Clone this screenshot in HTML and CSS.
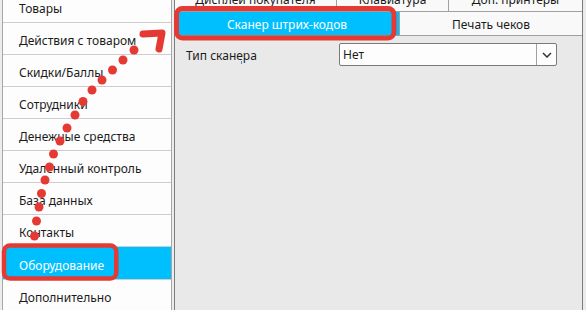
FILE: index.html
```html
<!DOCTYPE html>
<html lang="ru">
<head>
<meta charset="utf-8">
<link rel="stylesheet" href="styles.css">
</head>
<body>
<div class="app">
  <div class="edge"></div>
  <ul class="menu">
    <li class="item">Товары</li>
    <li class="item">Действия с товаром</li>
    <li class="item">Скидки/Баллы</li>
    <li class="item">Сотрудники</li>
    <li class="item">Денежные средства</li>
    <li class="item">Удаленный контроль</li>
    <li class="item">База данных</li>
    <li class="item">Контакты</li>
    <li class="item active">Оборудование</li>
    <li class="item">Дополнительно</li>
  </ul>
  <div class="gap"></div>
  <div class="main">
    <div class="tabrow first">
      <div class="tab t1">Дисплей покупателя</div>
      <div class="tab t2">Клавиатура</div>
      <div class="tab t3">Доп. принтеры</div>
    </div>
    <div class="tabrow second">
      <div class="tab sel">Сканер штрих-кодов</div>
      <div class="tab t5">Печать чеков</div>
    </div>
    <div class="pane">
      <div class="field">
        <span class="label">Тип сканера</span>
        <div class="combo">
          <span class="val">Нет</span>
          <span class="btn"><svg width="10" height="6" viewBox="0 0 10 6"><path d="M1 1 L5 5 L9 1" fill="none" stroke="#333" stroke-width="1.5"/></svg></span>
        </div>
      </div>
      <div class="caret"></div>
    </div>
  </div>
  <div class="rest"></div>
</div>
<svg class="annot" width="586" height="310" viewBox="0 0 586 310">
  <g fill="none" stroke="#e53a33">
    <rect x="4" y="245.5" width="112.3" height="33" rx="6" stroke-width="4.5"/>
    <rect x="176.5" y="8.5" width="217.5" height="29.5" rx="6" stroke-width="5"/>
    <path d="M143 34 L162 33 L159 49" stroke-width="7" stroke-linecap="round" stroke-linejoin="round"/>
  </g>
  <g fill="#e53a33">
    <circle cx="134" cy="50" r="4.5"/>
    <circle cx="123" cy="60" r="4.5"/>
    <circle cx="112.5" cy="70" r="4.5"/>
    <circle cx="102" cy="80" r="4.5"/>
    <circle cx="92" cy="90" r="4.5"/>
    <circle cx="83" cy="101.5" r="4.5"/>
    <circle cx="75" cy="115" r="4.5"/>
    <circle cx="67" cy="128" r="4.5"/>
    <circle cx="60" cy="141" r="4.5"/>
    <circle cx="53.5" cy="154" r="4.5"/>
    <circle cx="49.5" cy="167" r="4.5"/>
    <circle cx="45" cy="180" r="4.5"/>
    <circle cx="41.5" cy="193.5" r="4.5"/>
    <circle cx="39" cy="207" r="4.5"/>
    <circle cx="36.5" cy="221" r="4.5"/>
    <circle cx="34.5" cy="236" r="4.5"/>
  </g>
</svg>
</body>
</html>
```

FILE: styles.css
```css
html, body {
  margin: 0;
  padding: 0;
}
body {
  width: 586px;
  height: 310px;
  overflow: hidden;
  background: #ebebeb;
  font-family: "Noto Sans", "Open Sans", sans-serif;
  font-size: 12px;
  color: #1b1b1b;
  position: relative;
}
.app {
  display: flex;
  height: 310px;
}
.edge {
  width: 2px;
  background: #ececec;
  border-right: 1px solid #a8a8a8;
}
.menu {
  list-style: none;
  margin: -9px 0 0 0;
  padding: 0;
  width: 168px;
  background: #fdfdfd;
  border-right: 1px solid #a6a6a6;
}
.item {
  border-bottom: 1px solid #cdcdcd;
  display: flex;
  align-items: center;
  padding: 4px 0 0 16px;
  box-sizing: border-box;
  height: 32px;
}
.item.active {
  background: #00bfff;
  color: #ffffff;
  height: 33px;
}
.gap {
  width: 2px;
  background: #ececec;
}
.main {
  width: 407px;
  border-left: 1px solid #7c7c7c;
  border-right: 1px solid #7c7c7c;
  display: flex;
  flex-direction: column;
}
.tabrow {
  display: flex;
  border-bottom: 1px solid #a0a0a0;
}
.tabrow.first {
  margin-top: -13px;
  height: 24px;
}
.tabrow.second {
  height: 23px;
}
.tab {
  display: flex;
  align-items: center;
  justify-content: center;
  background: #f9f9f9;
  box-sizing: border-box;
  padding-top: 1px;
}
.t1 { width: 162px; border-right: 1px solid #a0a0a0; }
.t2 { width: 112px; border-right: 1px solid #a0a0a0; }
.t3 { flex: 1; }
.tab.sel {
  width: 224px;
  background: #00bfff;
  color: #ffffff;
}
.t5 {
  flex: 1;
  border-left: 1px solid #a0a0a0;
}
.pane {
  flex: 1;
  background: #e9e9e9;
  position: relative;
}
.field {
  display: flex;
  align-items: center;
  padding: 7px 0 0 11px;
}
.label {
  width: 153px;
  padding-top: 1px;
}
.combo {
  width: 218px;
  height: 23px;
  box-sizing: border-box;
  border: 1px solid #7a7a7a;
  border-radius: 2px;
  background: #fdfdfd;
  display: flex;
  align-items: center;
}
.val {
  flex: 1;
  padding-left: 3px;
}
.btn {
  width: 19px;
  height: 100%;
  border-left: 1px solid #a0a0a0;
  display: flex;
  align-items: center;
  justify-content: center;
}
.caret {
  position: absolute;
  left: 66px;
  top: 25px;
  width: 1px;
  height: 3px;
  background: #3d8ee0;
}
.rest {
  flex: 1;
  background: #ebebeb;
}
.annot {
  position: absolute;
  left: 0;
  top: 0;
  pointer-events: none;
}
```
